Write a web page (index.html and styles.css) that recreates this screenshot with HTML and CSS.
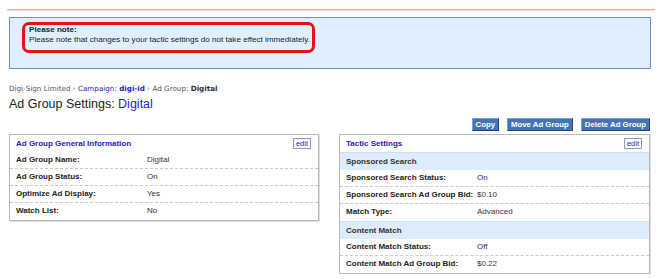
FILE: index.html
```html
<!DOCTYPE html>
<html lang="en">
<head>
    <meta charset="UTF-8">
    <title>Ad Group Settings: Digital</title>
    <link rel="stylesheet" href="styles.css">
</head>
<body>
    <div class="page">
        <div class="top-rule"></div>

        <div class="note-box">
            <div class="note-alert">
                <div class="note-title">Please note:</div>
                <div>Please note that changes to your tactic settings do not take effect immediately.</div>
            </div>
        </div>

        <div class="breadcrumb">
            <span>Digi-Sign Limited</span> <span class="sep">&rsaquo;</span>
            <a href="#">Campaign: <b>digi-id</b></a> <span class="sep">&rsaquo;</span>
            <span>Ad Group:</span> <b class="current">Digital</b>
        </div>

        <h1 class="page-title">Ad Group Settings: <span class="title-name">Digital</span></h1>

        <div class="actions">
            <button class="btn">Copy</button>
            <button class="btn">Move Ad Group</button>
            <button class="btn">Delete Ad Group</button>
        </div>

        <div class="panels">
            <div class="panel">
                <div class="panel-head">
                    <span class="panel-title">Ad Group General Information</span>
                    <span class="edit">edit</span>
                </div>
                <div class="row"><span class="label">Ad Group Name:</span><span>Digital</span></div>
                <div class="row"><span class="label">Ad Group Status:</span><span>On</span></div>
                <div class="row"><span class="label">Optimize Ad Display:</span><span>Yes</span></div>
                <div class="row last"><span class="label">Watch List:</span><span>No</span></div>
            </div>

            <div class="panel">
                <div class="panel-head">
                    <span class="panel-title">Tactic Settings</span>
                    <span class="edit">edit</span>
                </div>
                <div class="section">Sponsored Search</div>
                <div class="row"><span class="label">Sponsored Search Status:</span><span>On</span></div>
                <div class="row"><span class="label">Sponsored Search Ad Group Bid:</span><span>$0.10</span></div>
                <div class="row last"><span class="label">Match Type:</span><span>Advanced</span></div>
                <div class="section">Content Match</div>
                <div class="row"><span class="label">Content Match Status:</span><span>Off</span></div>
                <div class="row last"><span class="label">Content Match Ad Group Bid:</span><span>$0.22</span></div>
            </div>
        </div>
    </div>
</body>
</html>
```

FILE: styles.css
```css
body {
    margin: 0;
    font-family: "Liberation Sans", Arial, sans-serif;
    font-size: 8px;
    color: #222;
    background-color: #fff;
}
.page {
    padding-top: 9px;
}
.top-rule {
    margin: 0 5px 0 7px;
    border-top: 1px solid #f6aa8f;
    border-bottom: 1px solid #fcdcd0;
}
.note-box {
    margin: 6px 9px 0 9px;
    height: 46px;
    padding: 4px 0 0 12px;
    border: 1px solid #6d8fc2;
    background-color: #e0efff;
}
.note-alert {
    width: 283px;
    height: 25px;
    padding: 0 0 0 4px;
    border: 3px solid #e31414;
    border-radius: 7px;
    line-height: 10px;
    font-size: 8.1px;
    color: #222;
}
.note-title {
    font-weight: bold;
}
.breadcrumb {
    margin: 15px 9px 0;
    line-height: 10px;
    font-family: "DejaVu Sans", Verdana, sans-serif;
    font-size: 7.2px;
    color: #555;
}
.breadcrumb a {
    color: #2323c8;
    text-decoration: none;
}
.breadcrumb .sep {
    color: #777;
}
.breadcrumb .current {
    color: #333;
}
.page-title {
    margin: 2px 9px 0;
    line-height: 16px;
    font-size: 12.5px;
    font-weight: normal;
    color: #222;
}
.title-name {
    color: #1c1cd8;
}
.actions {
    display: flex;
    justify-content: flex-end;
    gap: 8px;
    margin: 6px 10px 0 9px;
}
.btn {
    margin: 0;
    padding: 0 3px;
    height: 13px;
    line-height: 11px;
    font-family: "Liberation Sans", Arial, sans-serif;
    font-size: 7.8px;
    font-weight: bold;
    color: #fff;
    background-color: #4574b6;
    border: 1px solid;
    border-color: #7b9fd3 #22477f #22477f #7b9fd3;
    border-radius: 0;
}
.panels {
    display: grid;
    grid-template-columns: 310px 311px;
    column-gap: 20px;
    align-items: start;
    margin: 3px 9px 0;
}
.panel {
    border: 1px solid #b9b9b9;
    box-shadow: 1px 1px 0 #dcdcdc;
    background-color: #fff;
}
.panel-head {
    display: flex;
    justify-content: space-between;
    align-items: center;
    height: 17px;
    padding: 0 7px 0 6px;
}
.panel-title {
    font-weight: bold;
    color: #1a1ad2;
}
.edit {
    padding: 0 2px;
    line-height: 9px;
    font-size: 7.5px;
    color: #2323c8;
    border: 1px solid #8c9bb0;
    background-color: #fff;
}
.section {
    height: 17px;
    line-height: 17px;
    padding: 0 6px;
    font-weight: bold;
    color: #333;
    background-color: #dcecfb;
    border-top: 1px solid #cfdfef;
}
.row {
    display: grid;
    grid-template-columns: 131px 1fr;
    height: 16px;
    line-height: 16px;
    padding: 0 6px;
    color: #333;
    border-bottom: 1px dashed #c8c8c8;
}
.row.last {
    border-bottom: 1px solid #fff;
}
.label {
    font-weight: bold;
    color: #222;
}
```
